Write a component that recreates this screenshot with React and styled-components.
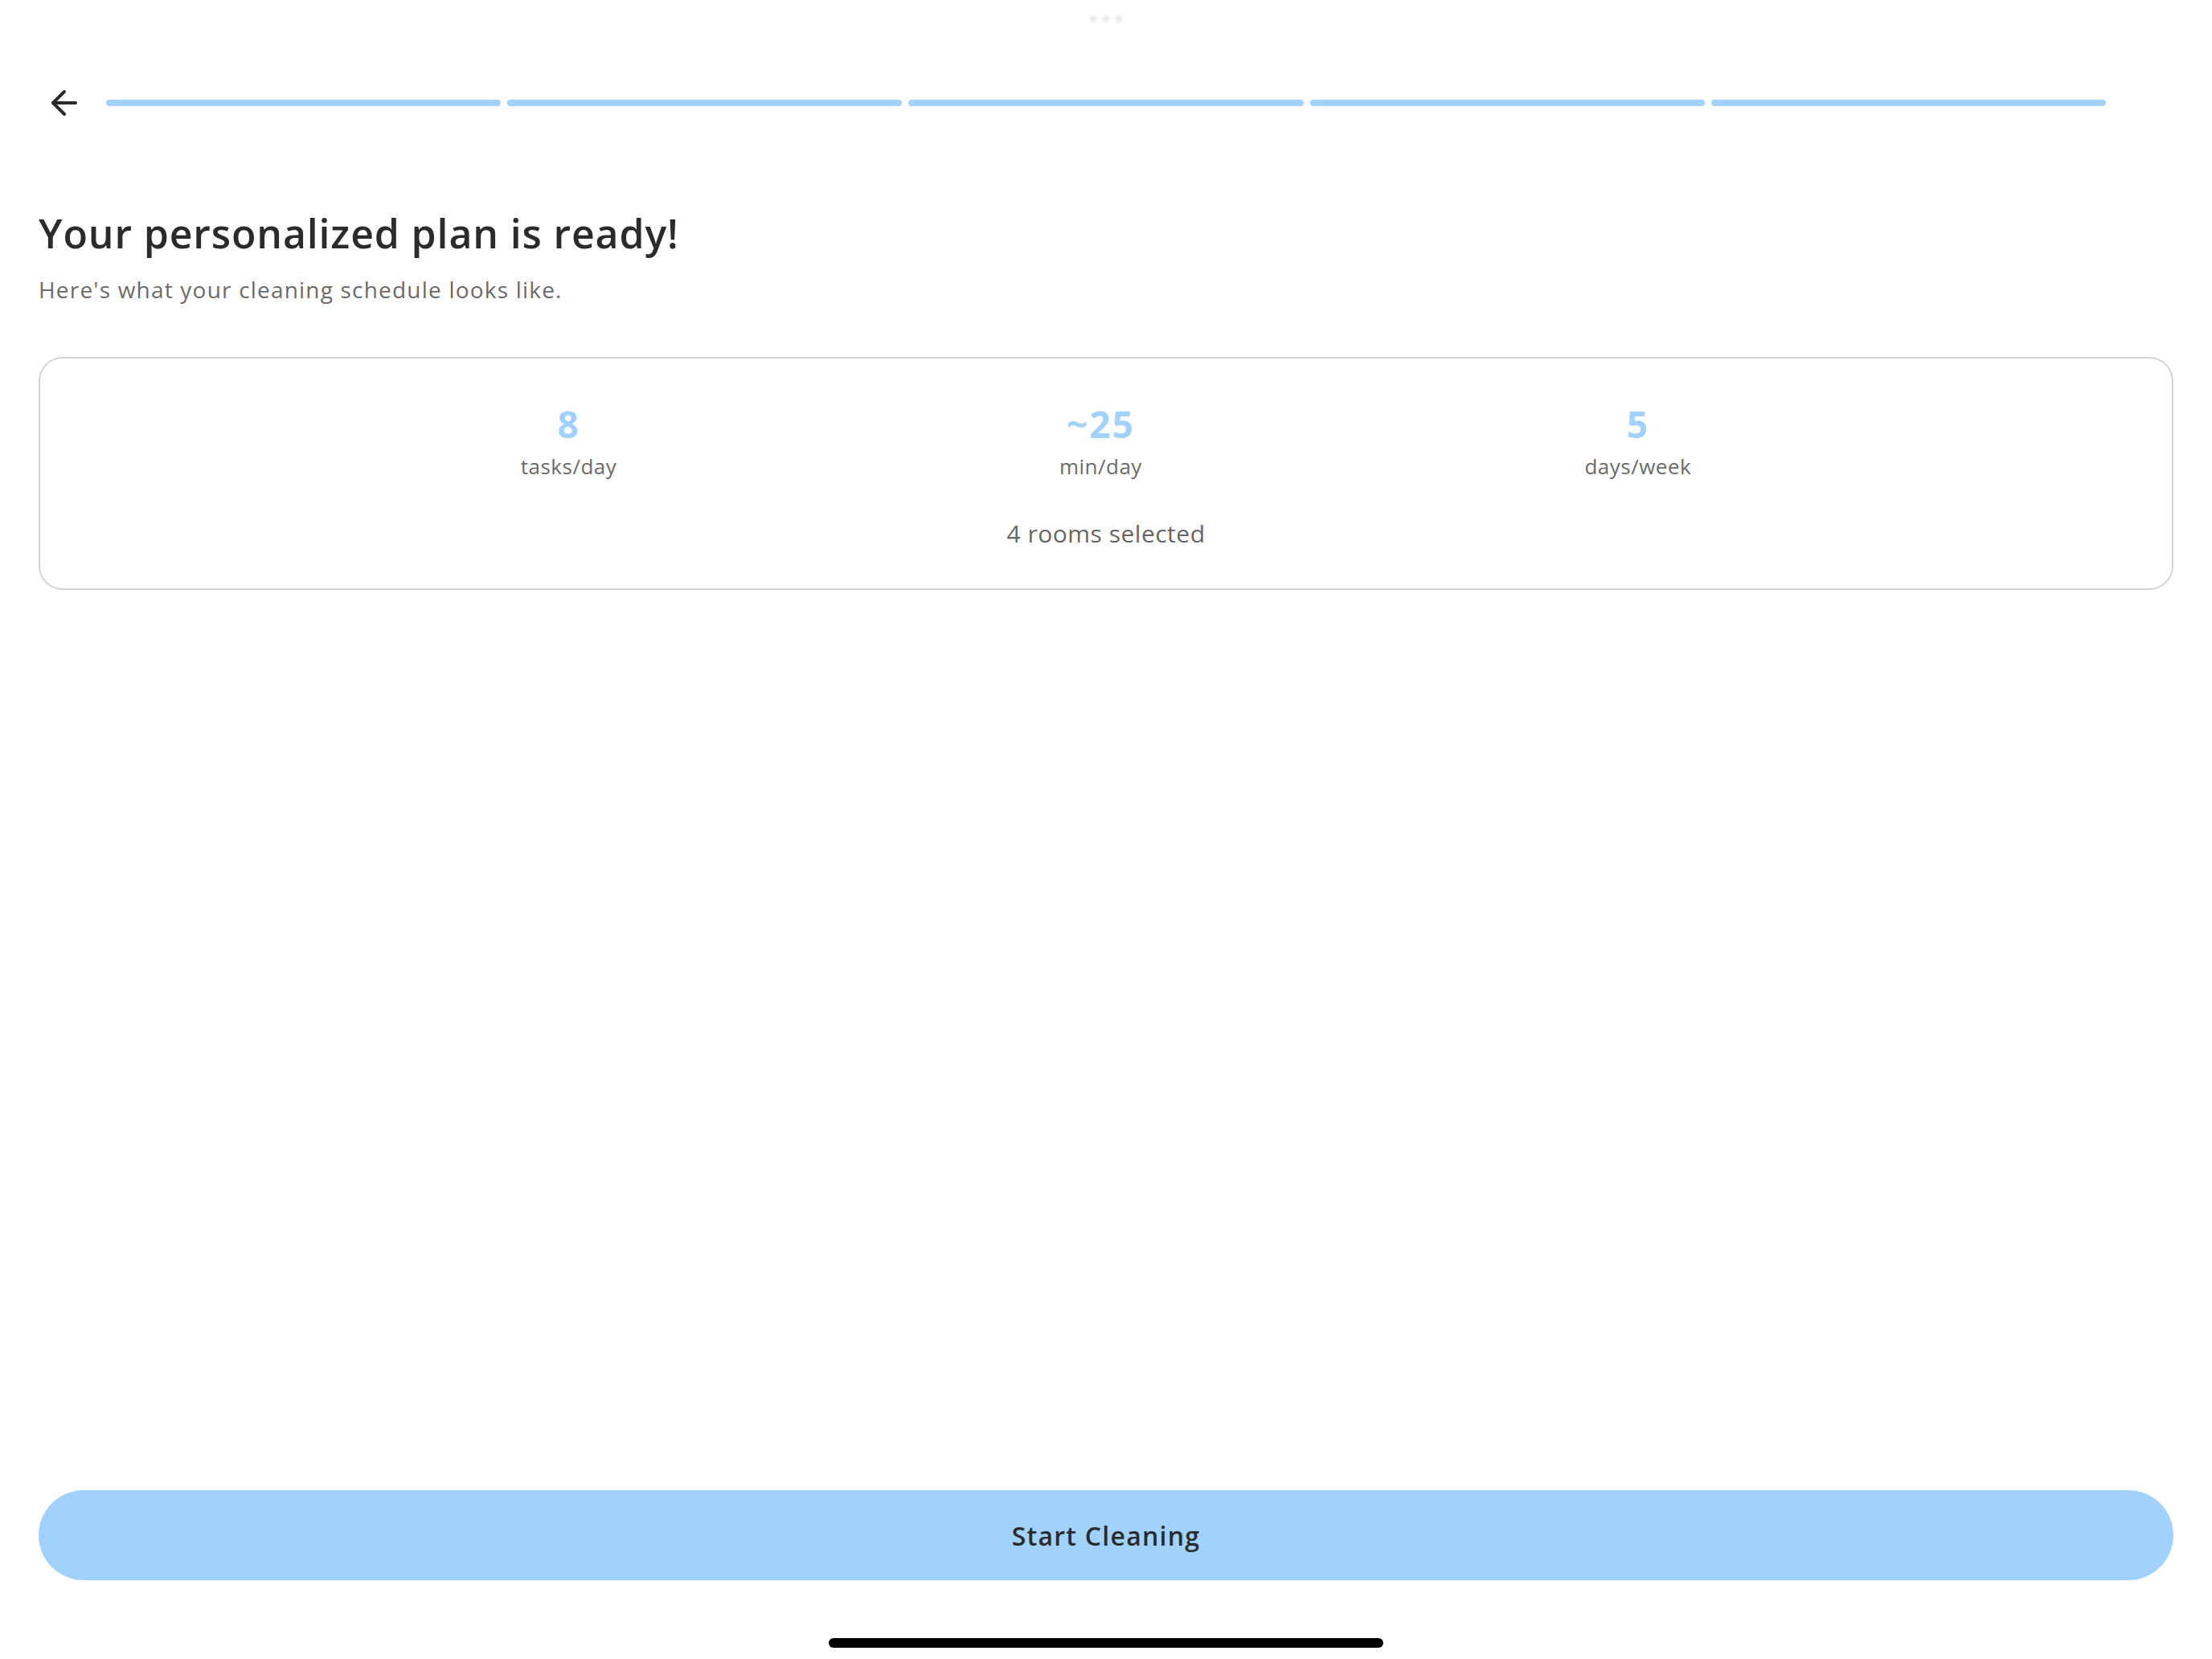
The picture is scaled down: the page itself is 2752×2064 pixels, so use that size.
import React from 'react';
import styled, { createGlobalStyle } from 'styled-components';
import { ArrowLeft } from 'lucide-react';

const GlobalStyle = createGlobalStyle`
  html, body {
    margin: 0;
    padding: 0;
    background: #ffffff;
  }
  body {
    font-family: "Open Sans", "Noto Sans", sans-serif;
    color: #2b2b2b;
  }
  * {
    box-sizing: border-box;
  }
`;

const Page = styled.div`
  display: flex;
  flex-direction: column;
  min-height: 100vh;
  padding: 0 48px;
`;

const Handle = styled.div`
  display: flex;
  justify-content: center;
  align-items: center;
  gap: 6px;
  height: 48px;

  span {
    width: 10px;
    height: 10px;
    border-radius: 50%;
    background: #f0f0f0;
  }
`;

const Header = styled.div`
  display: flex;
  align-items: center;
  height: 48px;
  margin-top: 56px;
`;

const BackButton = styled.button`
  display: flex;
  align-items: center;
  justify-content: center;
  width: 48px;
  height: 48px;
  margin-left: 8px;
  padding: 0;
  border: none;
  background: none;
  color: #2b2b2b;
  cursor: pointer;
`;

const Progress = styled.div`
  flex: 1;
  display: flex;
  gap: 8px;
  margin-left: 28px;
  margin-right: 84px;
`;

const Segment = styled.div`
  flex: 1;
  height: 8px;
  border-radius: 4px;
  background: ${(p) => (p.$done ? '#a1d2fe' : '#e6e6e6')};
`;

const Title = styled.h1`
  margin: 103px 0 0;
  font-size: 50px;
  font-weight: 600;
  line-height: 70px;
  letter-spacing: 0.85px;
  color: #2b2b2b;
`;

const Subtitle = styled.p`
  margin: 15px 0 0;
  font-size: 28px;
  line-height: 40px;
  font-weight: 400;
  letter-spacing: 1.2px;
  color: #6b6b6b;
`;

const Card = styled.div`
  margin-top: 64px;
  border: 2px solid #d6d2da;
  border-radius: 30px;
  padding: 53px 32px 48px;
  display: flex;
  flex-direction: column;
  align-items: center;
`;

const Stats = styled.div`
  display: flex;
  justify-content: space-around;
  width: 100%;
  max-width: 2007px;
`;

const Stat = styled.div`
  display: flex;
  flex-direction: column;
  align-items: center;
`;

const Value = styled.div`
  font-size: 46px;
  line-height: 56px;
  font-weight: 700;
  letter-spacing: 2px;
  color: #a1d2fe;
`;

const Label = styled.div`
  margin-top: 8px;
  font-size: 26px;
  line-height: 34px;
  letter-spacing: 0.5px;
  color: #6b6b6b;
`;

const Rooms = styled.div`
  margin-top: 47px;
  font-size: 30px;
  line-height: 40px;
  letter-spacing: 0.5px;
  color: #666666;
`;

const Spacer = styled.div`
  flex: 1;
`;

const PrimaryButton = styled.button`
  height: 112px;
  width: 100%;
  border: none;
  border-radius: 56px;
  background: #a1d2fe;
  font-family: inherit;
  font-size: 32px;
  font-weight: 600;
  letter-spacing: 1.25px;
  color: #2b2b2b;
  cursor: pointer;
`;

const HomeBar = styled.div`
  align-self: center;
  width: 690px;
  height: 12px;
  border-radius: 6px;
  background: #000000;
  margin: 72px 0 14px;
`;

const stats = [
  { value: '8', label: 'tasks/day' },
  { value: '~25', label: 'min/day' },
  { value: '5', label: 'days/week' },
];

export default function App() {
  return (
    <>
      <GlobalStyle />
      <Page>
        <Handle>
          <span />
          <span />
          <span />
        </Handle>
        <Header>
          <BackButton aria-label="Back">
            <ArrowLeft size={48} strokeWidth={2} />
          </BackButton>
          <Progress>
            {[0, 1, 2, 3, 4].map((i) => (
              <Segment key={i} $done />
            ))}
          </Progress>
        </Header>

        <Title>Your personalized plan is ready!</Title>
        <Subtitle>Here's what your cleaning schedule looks like.</Subtitle>

        <Card>
          <Stats>
            {stats.map((s) => (
              <Stat key={s.label}>
                <Value>{s.value}</Value>
                <Label>{s.label}</Label>
              </Stat>
            ))}
          </Stats>
          <Rooms>4 rooms selected</Rooms>
        </Card>

        <Spacer />
        <PrimaryButton>Start Cleaning</PrimaryButton>
        <HomeBar />
      </Page>
    </>
  );
}
